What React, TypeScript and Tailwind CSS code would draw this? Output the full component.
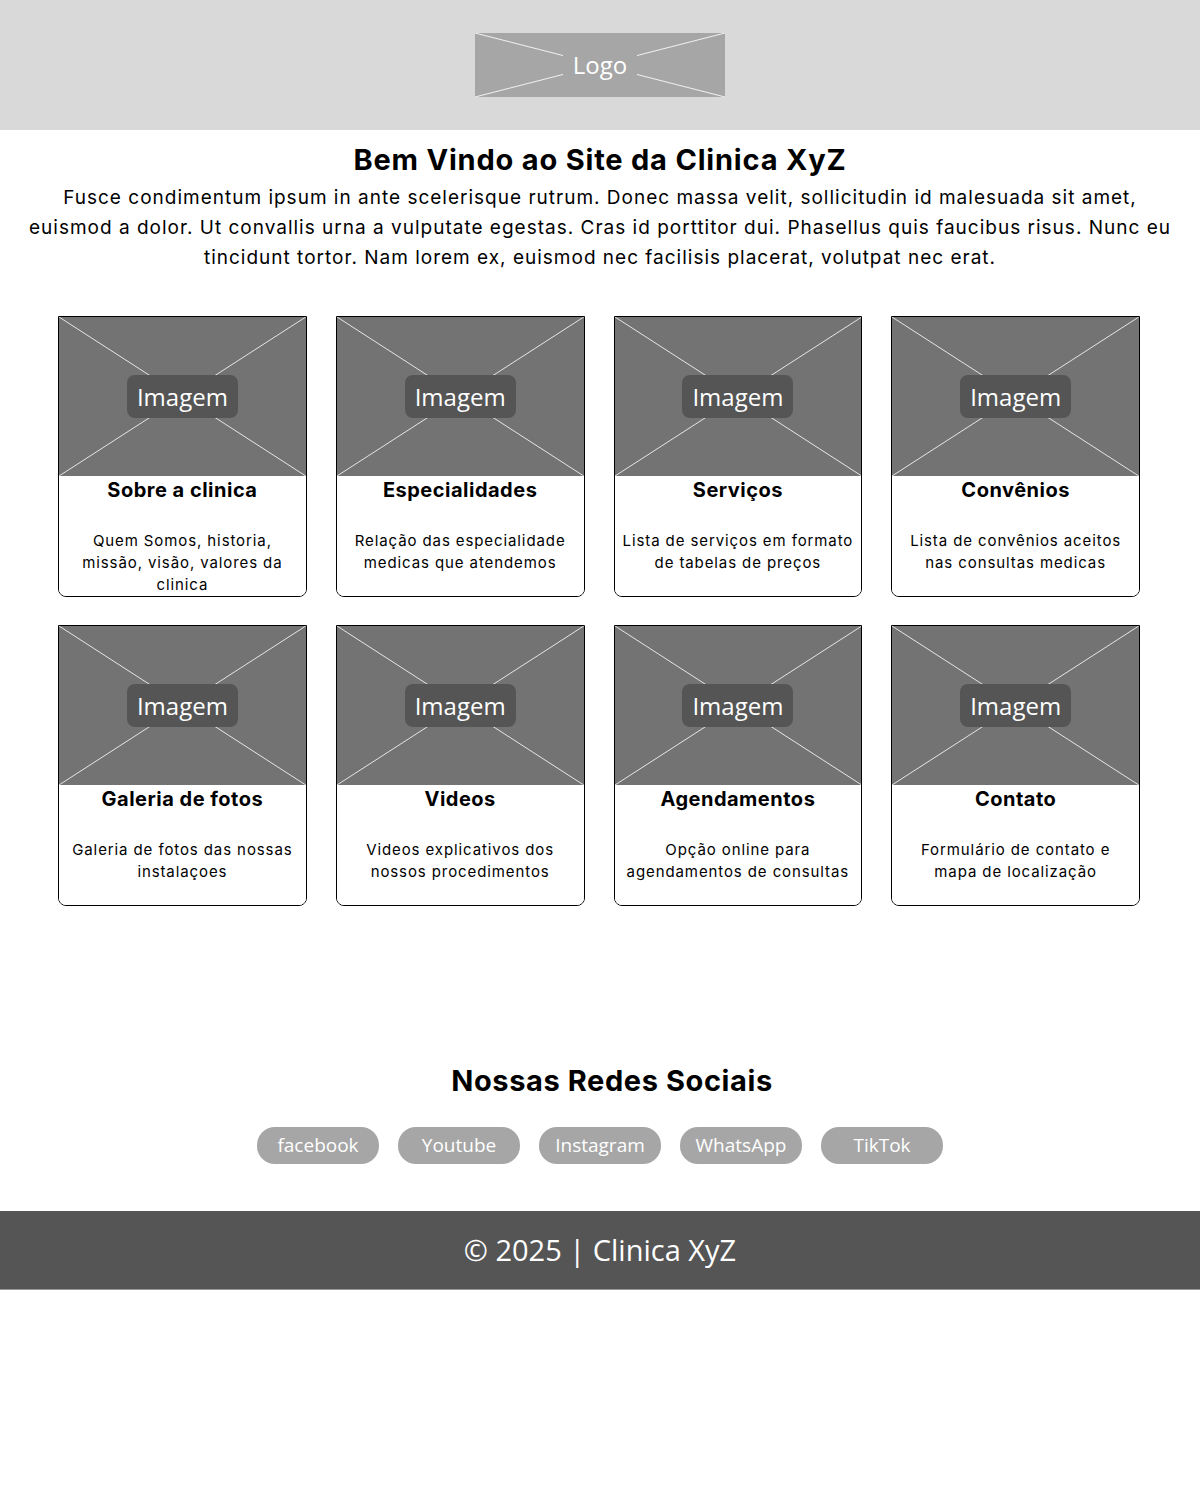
const sans = "font-['Inter','Noto_Sans',sans-serif]";
const open = "font-['Open_Sans','Noto_Sans',sans-serif]";

type Card = { title: string; desc: string };

const cards: Card[] = [
  { title: "Sobre a clinica", desc: "Quem Somos, historia, missão, visão, valores da clinica" },
  { title: "Especialidades", desc: "Relação das especialidade medicas que atendemos" },
  { title: "Serviços", desc: "Lista de serviços em formato de tabelas de preços" },
  { title: "Convênios", desc: "Lista de convênios aceitos nas consultas medicas" },
  { title: "Galeria de fotos", desc: "Galeria de fotos das nossas instalaçoes" },
  { title: "Videos", desc: "Videos explicativos dos nossos procedimentos" },
  { title: "Agendamentos", desc: "Opção online para agendamentos de consultas" },
  { title: "Contato", desc: "Formulário de contato e mapa de localização" },
];

const intro = [
  "Fusce condimentum ipsum in ante scelerisque rutrum. Donec massa velit, sollicitudin id malesuada sit amet,",
  "euismod a dolor. Ut convallis urna a vulputate egestas. Cras id porttitor dui. Phasellus quis faucibus risus. Nunc eu",
  "tincidunt tortor. Nam lorem ex, euismod nec facilisis placerat, volutpat nec erat.",
];

const redes = ["facebook", "Youtube", "Instagram", "WhatsApp", "TikTok"];

function Cross({ color }: { color: string }) {
  return (
    <svg className="absolute inset-0 h-full w-full" viewBox="0 0 100 100" preserveAspectRatio="none">
      <line x1="0" y1="0" x2="100" y2="100" stroke={color} strokeWidth="1" vectorEffect="non-scaling-stroke" />
      <line x1="100" y1="0" x2="0" y2="100" stroke={color} strokeWidth="1" vectorEffect="non-scaling-stroke" />
    </svg>
  );
}

function CardItem({ card }: { card: Card }) {
  return (
    <div className="flex h-[281px] flex-col overflow-hidden rounded-b-lg border border-black">
      <div className="relative flex h-[159px] shrink-0 items-center justify-center bg-[#737373]">
        <Cross color="#e6e6e6" />
        <span className={`relative rounded-lg bg-[#555555] px-[10px] py-[4px] text-[24px] leading-[35px] text-white ${open}`}>
          Imagem
        </span>
      </div>
      <div className="flex flex-1 flex-col items-center bg-white px-[6px] text-center">
        <h3 className={`mt-[1px] text-[20px] font-bold leading-[26px] tracking-[0.5px] text-black ${sans}`}>{card.title}</h3>
        <p className={`mt-[27px] text-[15px] leading-[22px] tracking-[0.9px] text-black ${sans}`}>{card.desc}</p>
      </div>
    </div>
  );
}

export default function App() {
  return (
    <div className="min-h-screen bg-white">
      <header className="flex h-[130px] items-center justify-center bg-[#d9d9d9]">
        <div className="relative flex h-[64px] w-[250px] items-center justify-center bg-[#a6a6a6]">
          <Cross color="#f2f2f2" />
          <span className={`relative bg-[#a6a6a6] px-[10px] text-[24px] leading-[32px] text-white ${open}`}>Logo</span>
        </div>
      </header>

      <section className="px-[16px] pt-[12px] text-center">
        <h1 className={`text-[29px] font-bold leading-[36px] tracking-[0.8px] text-black ${sans}`}>
          Bem Vindo ao Site da Clinica XyZ
        </h1>
        <div className={`mt-[5px] flex flex-col items-center text-[19px] leading-[30px] tracking-[1px] text-black ${sans}`}>
          {intro.map((line) => (
            <p key={line} className="whitespace-nowrap">
              {line}
            </p>
          ))}
        </div>
      </section>

      <section className="ml-[58px] mt-[43px] grid w-[1082px] grid-cols-4 gap-x-[29px] gap-y-[28px]">
        {cards.map((c) => (
          <CardItem key={c.title} card={c} />
        ))}
      </section>

      <section className="mt-[157px] flex flex-col items-center pl-[24px]">
        <h2 className={`text-[29px] font-bold leading-[36px] tracking-[0.6px] text-black ${sans}`}>Nossas Redes Sociais</h2>
      </section>
      <div className="mt-[28px] flex justify-center gap-[19px]">
        {redes.map((r) => (
          <span
            key={r}
            className={`flex h-[37px] w-[122px] items-center justify-center rounded-[18px] bg-[#a6a6a6] text-[19px] text-white ${open}`}
          >
            {r}
          </span>
        ))}
      </div>

      <footer className="mt-[47px] flex h-[79px] items-center justify-center border-b border-[#9a9a9a] bg-[#555555]">
        <span className={`text-[29px] text-white ${open}`}>© 2025 | Clinica XyZ</span>
      </footer>
    </div>
  );
}
